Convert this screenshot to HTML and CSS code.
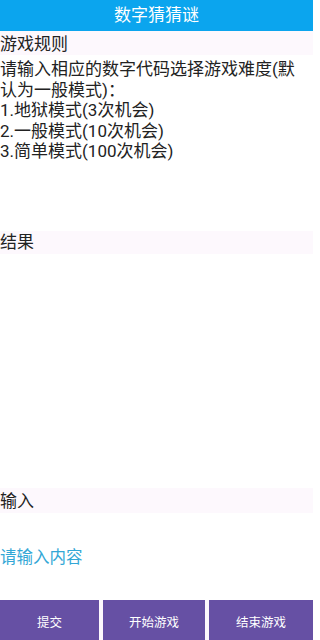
FILE: index.html
```html
<!DOCTYPE html>
<html lang="zh-CN">
<head>
<meta charset="utf-8">
<title>数字猜猜谜</title>
<link rel="stylesheet" href="styles.css">
</head>
<body>
<div class="app">
  <header class="topbar">数字猜猜谜</header>
  <section class="rules">
    <div class="label label-rules">游戏规则</div>
    <p class="rules-text">请输入相应的数字代码选择游戏难度(默认为一般模式)：<br>1.地狱模式(3次机会)<br>2.一般模式(10次机会)<br>3.简单模式(100次机会)</p>
  </section>
  <div class="label label-result">结果</div>
  <section class="result"></section>
  <div class="label label-input">输入</div>
  <div class="input-area">
    <input class="answer" type="text" placeholder="请输入内容">
  </div>
  <nav class="actions">
    <button class="btn">提交</button>
    <button class="btn">开始游戏</button>
    <button class="btn">结束游戏</button>
  </nav>
</div>
</body>
</html>
```
FILE: styles.css
```css
* { box-sizing: border-box; }
html, body { margin: 0; padding: 0; background: #ffffff; }
body {
  font-family: Roboto, "Noto Sans CJK SC", sans-serif;
  color: #222222;
}
.app {
  width: 313px;
  height: 640px;
  display: flex;
  flex-direction: column;
  overflow: hidden;
}
.topbar {
  height: 31px;
  line-height: 31px;
  background: #0ba5ee;
  color: #ffffff;
  text-align: center;
  font-size: 17px;
  flex: none;
}
.label {
  background: #fdf8fd;
  font-size: 17px;
  padding-left: 0;
  flex: none;
}
.label-rules { height: 24px; line-height: 26px; }
.label-result { height: 23px; line-height: 23px; }
.label-input { height: 25px; line-height: 26px; }
.rules {
  height: 200px;
  flex: none;
}
.rules-text {
  margin: 4px 0 0 0;
  font-size: 17px;
  line-height: 20.6px;
  padding-right: 4px;
}
.result {
  height: 234px;
  flex: none;
}
.input-area {
  height: 87px;
  display: flex;
  align-items: center;
  flex: none;
}
.answer {
  border: none;
  outline: none;
  background: transparent;
  width: 100%;
  padding: 0;
  font-family: Roboto, "Noto Sans CJK SC", sans-serif;
  font-size: 16.5px;
  margin-top: 2px;
}
.answer::placeholder { color: #33a7d6; opacity: 1; }
.actions {
  flex: none;
  height: 40px;
  display: grid;
  grid-template-columns: 99fr 102fr 104fr;
  column-gap: 4px;
  background: #fdf8fd;
}
.btn {
  border: none;
  margin: 0;
  padding: 0;
  background: #6650a4;
  color: #ffffff;
  font-family: Roboto, "Noto Sans CJK SC", sans-serif;
  font-size: 12.5px;
  padding-top: 3px;
}
```
